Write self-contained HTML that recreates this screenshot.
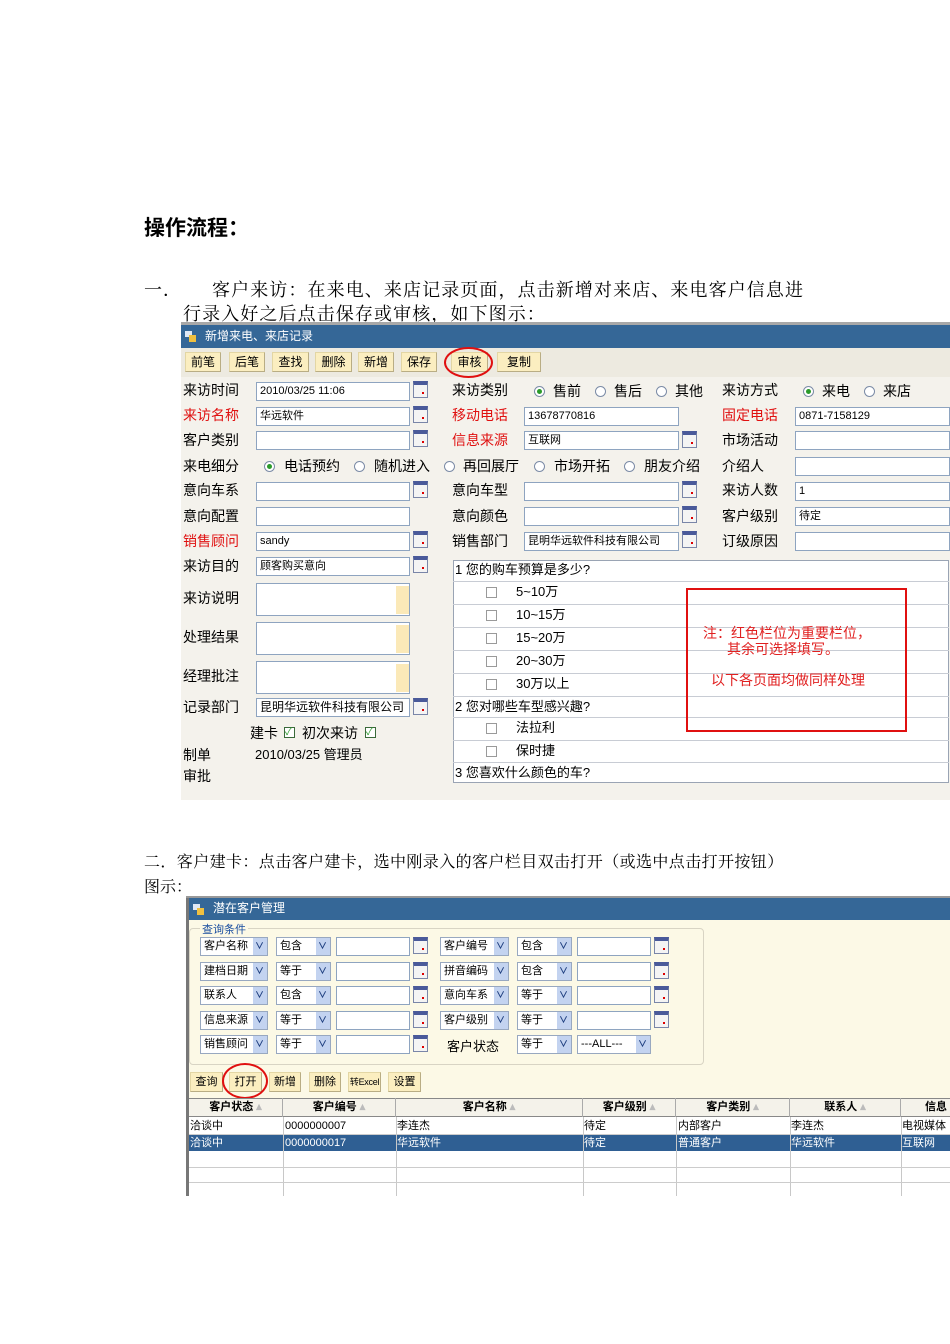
<!DOCTYPE html>
<html><head><meta charset="utf-8"><style>
*{margin:0;padding:0;box-sizing:border-box}
body{width:950px;height:1344px;background:#fff;position:relative;overflow:hidden;font-family:"Liberation Sans","Noto Sans CJK SC",sans-serif;color:#000}
.a{position:absolute;white-space:nowrap}
.s{font-family:"Liberation Serif","Noto Serif CJK SC",serif}
.l{position:absolute;font-size:14px;line-height:16px;white-space:nowrap}
.r{color:#e01010}
.in{position:absolute;height:19px;background:#fff;border:1px solid #8ea4c0;font-size:11px;line-height:17px;padding-left:3px;white-space:nowrap;overflow:hidden}
.cal{position:absolute;width:15px;height:17px;border:1px solid #7a86a8;background:#f4f4f4;border-top:4px solid #4a5a9a}
.cal:after{content:"";position:absolute;right:3px;bottom:3px;width:2px;height:2px;background:#d00}
.btn{position:absolute;height:20px;background:#fbeec0;border:1px solid #e3d6a4;border-right-color:#b9ad84;border-bottom-color:#b9ad84;font-size:12px;line-height:18px;text-align:center;white-space:nowrap;overflow:hidden}
.rad{position:absolute;width:11px;height:11px;border:1px solid #7b8ba6;border-radius:50%;background:#fff}
.rad.on:after{content:"";position:absolute;left:2px;top:2px;width:5px;height:5px;border-radius:50%;background:#2a9a2a}
.chk{position:absolute;width:11px;height:11px;border:1px solid #9a9a9a;background:#fff}
.ta{position:absolute;width:154px;height:33px;background:#fff;border:1px solid #8ea4c0}
.ta:after{content:"";position:absolute;right:0;top:2px;width:13px;height:28px;background:#fbe9b8}
.qr{position:absolute;left:453px;width:496px;border-bottom:1px solid #c8ccd4;font-size:13px;line-height:20px}
.sel{position:absolute;height:19px;background:#fff;border:1px solid #98a8c0;font-size:11px;line-height:17px;padding-left:3px;white-space:nowrap}
.sel:after{content:"";position:absolute;right:0;top:0;width:14px;height:17px;background:#c3d3f0}
.sel b{position:absolute;right:3px;top:0;font-size:9px;color:#204080;z-index:1;font-weight:bold}
.th{position:absolute;top:1098px;height:19px;font-size:11px;font-weight:bold;line-height:19px;text-align:center;border-right:1px solid #aaa}
.td{position:absolute;font-size:11px;line-height:17px;height:17px}
</style></head><body>

<div class="a" style="left:144px;top:212px;font-size:21px;font-weight:bold;font-family:'Liberation Serif','Noto Sans CJK SC',sans-serif">操作流程：</div>
<div class="a s" style="left:144px;top:276px;font-size:18px;letter-spacing:1px">一．</div>
<div class="a s" style="left:212px;top:276px;font-size:18px;letter-spacing:1.1px">客户来访：在来电、来店记录页面，点击新增对来店、来电客户信息进</div>
<div class="a s" style="left:183px;top:300px;font-size:18px;letter-spacing:1.1px">行录入好之后点击保存或审核，如下图示：</div>

<div class="a" style="left:181px;top:322px;width:769px;height:478px;background:#f4f2ec"></div>
<div class="a" style="left:181px;top:322px;width:769px;height:3px;background:#a8a8a8"></div>
<div class="a" style="left:181px;top:325px;width:769px;height:23px;background:#356797;color:#fff;font-size:12px;line-height:22px;padding-left:24px">新增来电、来店记录</div>
<div class="a" style="left:185px;top:331px;width:7px;height:6px;background:#dfe8f5"></div>
<div class="a" style="left:189px;top:335px;width:7px;height:7px;background:#f0c040"></div>
<div class="a" style="left:181px;top:348px;width:769px;height:29px;background:#edeae0"></div>
<div class="btn" style="left:185px;top:352px;width:36px">前笔</div>
<div class="btn" style="left:229px;top:352px;width:36px">后笔</div>
<div class="btn" style="left:272px;top:352px;width:37px">查找</div>
<div class="btn" style="left:315px;top:352px;width:37px">删除</div>
<div class="btn" style="left:358px;top:352px;width:36px">新增</div>
<div class="btn" style="left:401px;top:352px;width:36px">保存</div>
<div class="btn" style="left:451px;top:352px;width:37px">审核</div>
<div class="btn" style="left:497px;top:352px;width:44px">复制</div>
<div class="a" style="left:444px;top:347px;width:49px;height:31px;border:2px solid #e01010;border-radius:50%"></div>

<div class="l" style="left:183px;top:382px">来访时间</div>
<div class="in" style="left:256px;top:382px;width:154px">2010/03/25 11:06</div><div class="cal" style="left:413px;top:381px"></div>
<div class="l" style="left:452px;top:382px">来访类别</div>
<div class="rad on" style="left:534px;top:386px"></div><div class="l" style="left:553px;top:383px">售前</div>
<div class="rad" style="left:595px;top:386px"></div><div class="l" style="left:614px;top:383px">售后</div>
<div class="rad" style="left:656px;top:386px"></div><div class="l" style="left:675px;top:383px">其他</div>
<div class="l" style="left:722px;top:382px">来访方式</div>
<div class="rad on" style="left:803px;top:386px"></div><div class="l" style="left:822px;top:383px">来电</div>
<div class="rad" style="left:864px;top:386px"></div><div class="l" style="left:883px;top:383px">来店</div>

<div class="l r" style="left:183px;top:407px">来访名称</div>
<div class="in" style="left:256px;top:407px;width:154px">华远软件</div><div class="cal" style="left:413px;top:406px"></div>
<div class="l r" style="left:452px;top:407px">移动电话</div>
<div class="in" style="left:524px;top:407px;width:155px">13678770816</div>
<div class="l r" style="left:722px;top:407px">固定电话</div>
<div class="in" style="left:795px;top:407px;width:155px">0871-7158129</div>

<div class="l" style="left:183px;top:432px">客户类别</div>
<div class="in" style="left:256px;top:431px;width:154px"></div><div class="cal" style="left:413px;top:430px"></div>
<div class="l r" style="left:452px;top:432px">信息来源</div>
<div class="in" style="left:524px;top:431px;width:155px">互联网</div><div class="cal" style="left:682px;top:431px"></div>
<div class="l" style="left:722px;top:432px">市场活动</div>
<div class="in" style="left:795px;top:431px;width:155px"></div>

<div class="l" style="left:183px;top:458px">来电细分</div>
<div class="rad on" style="left:264px;top:461px"></div><div class="l" style="left:284px;top:458px">电话预约</div>
<div class="rad" style="left:354px;top:461px"></div><div class="l" style="left:374px;top:458px">随机进入</div>
<div class="rad" style="left:444px;top:461px"></div><div class="l" style="left:463px;top:458px">再回展厅</div>
<div class="rad" style="left:534px;top:461px"></div><div class="l" style="left:554px;top:458px">市场开拓</div>
<div class="rad" style="left:624px;top:461px"></div><div class="l" style="left:644px;top:458px">朋友介绍</div>
<div class="l" style="left:722px;top:458px">介绍人</div>
<div class="in" style="left:795px;top:457px;width:155px"></div>

<div class="l" style="left:183px;top:482px">意向车系</div>
<div class="in" style="left:256px;top:482px;width:154px"></div><div class="cal" style="left:413px;top:481px"></div>
<div class="l" style="left:452px;top:482px">意向车型</div>
<div class="in" style="left:524px;top:482px;width:155px"></div><div class="cal" style="left:682px;top:481px"></div>
<div class="l" style="left:722px;top:482px">来访人数</div>
<div class="in" style="left:795px;top:482px;width:155px">1</div>

<div class="l" style="left:183px;top:508px">意向配置</div>
<div class="in" style="left:256px;top:507px;width:154px"></div>
<div class="l" style="left:452px;top:508px">意向颜色</div>
<div class="in" style="left:524px;top:507px;width:155px"></div><div class="cal" style="left:682px;top:506px"></div>
<div class="l" style="left:722px;top:508px">客户级别</div>
<div class="in" style="left:795px;top:507px;width:155px">待定</div>

<div class="l r" style="left:183px;top:533px">销售顾问</div>
<div class="in" style="left:256px;top:532px;width:154px">sandy</div><div class="cal" style="left:413px;top:531px"></div>
<div class="l" style="left:452px;top:533px">销售部门</div>
<div class="in" style="left:524px;top:532px;width:155px">昆明华远软件科技有限公司</div><div class="cal" style="left:682px;top:531px"></div>
<div class="l" style="left:722px;top:533px">订级原因</div>
<div class="in" style="left:795px;top:532px;width:155px"></div>

<div class="l" style="left:183px;top:558px">来访目的</div>
<div class="in" style="left:256px;top:557px;width:154px">顾客购买意向</div><div class="cal" style="left:413px;top:556px"></div>
<div class="l" style="left:183px;top:590px">来访说明</div><div class="ta" style="left:256px;top:583px"></div>
<div class="l" style="left:183px;top:629px">处理结果</div><div class="ta" style="left:256px;top:622px"></div>
<div class="l" style="left:183px;top:668px">经理批注</div><div class="ta" style="left:256px;top:661px"></div>
<div class="l" style="left:183px;top:699px">记录部门</div>
<div class="in" style="left:256px;top:698px;width:154px;font-size:12px">昆明华远软件科技有限公司</div><div class="cal" style="left:413px;top:698px"></div>
<div class="l" style="left:250px;top:725px">建卡</div><div class="chk" style="left:284px;top:727px;border-color:#3a6a3a;color:#2a9a2a;font-size:10px;line-height:9px">✓</div>
<div class="l" style="left:302px;top:725px">初次来访</div><div class="chk" style="left:365px;top:727px;border-color:#3a6a3a;color:#2a9a2a;font-size:10px;line-height:9px">✓</div>
<div class="l" style="left:183px;top:747px">制单</div>
<div class="l" style="left:255px;top:747px;font-size:13px">2010/03/25 管理员</div>
<div class="l" style="left:183px;top:768px">审批</div>

<div class="a" style="left:453px;top:560px;width:496px;height:223px;border:1px solid #9aa4b4;background:#fff"></div>
<div class="qr" style="top:560px;height:22px;padding-left:2px">1 您的购车预算是多少?</div>
<div class="qr" style="top:582px;height:23px;padding-left:63px">5~10万</div>
<div class="qr" style="top:605px;height:23px;padding-left:63px">10~15万</div>
<div class="qr" style="top:628px;height:23px;padding-left:63px">15~20万</div>
<div class="qr" style="top:651px;height:23px;padding-left:63px">20~30万</div>
<div class="qr" style="top:674px;height:23px;padding-left:63px">30万以上</div>
<div class="qr" style="top:697px;height:21px;padding-left:2px">2 您对哪些车型感兴趣?</div>
<div class="qr" style="top:718px;height:23px;padding-left:63px">法拉利</div>
<div class="qr" style="top:741px;height:22px;padding-left:63px">保时捷</div>
<div class="qr" style="top:763px;height:20px;padding-left:2px;border:none">3 您喜欢什么颜色的车?</div>
<div class="chk" style="left:486px;top:587px"></div>
<div class="chk" style="left:486px;top:610px"></div>
<div class="chk" style="left:486px;top:633px"></div>
<div class="chk" style="left:486px;top:656px"></div>
<div class="chk" style="left:486px;top:679px"></div>
<div class="chk" style="left:486px;top:723px"></div>
<div class="chk" style="left:486px;top:746px"></div>
<div class="a" style="left:686px;top:588px;width:221px;height:144px;border:2px solid #e01010"></div>
<div class="a" style="left:703px;top:625px;font-size:14px;color:#e02020;line-height:16px">注：红色栏位为重要栏位，</div>
<div class="a" style="left:727px;top:641px;font-size:14px;color:#e02020;line-height:16px">其余可选择填写。</div>
<div class="a" style="left:711px;top:672px;font-size:14px;color:#e02020;line-height:16px">以下各页面均做同样处理</div>

<div class="a s" style="left:144px;top:849px;font-size:16px;letter-spacing:0.4px">二．客户建卡：点击客户建卡，选中刚录入的客户栏目双击打开（或选中点击打开按钮）</div>
<div class="a s" style="left:144px;top:874px;font-size:16px">图示：</div>

<div class="a" style="left:186px;top:896px;width:764px;height:300px;background:#fcf9e6"></div>
<div class="a" style="left:186px;top:896px;width:3px;height:300px;background:#777"></div>
<div class="a" style="left:186px;top:896px;width:764px;height:2px;background:#999"></div>
<div class="a" style="left:189px;top:898px;width:761px;height:22px;background:#356797;color:#fff;font-size:12px;line-height:21px;padding-left:24px">潜在客户管理</div>
<div class="a" style="left:193px;top:904px;width:7px;height:6px;background:#dfe8f5"></div>
<div class="a" style="left:197px;top:908px;width:7px;height:7px;background:#f0c040"></div>
<div class="a" style="left:189px;top:928px;width:515px;height:137px;border:1px solid #d8d4c4;border-radius:4px"></div>
<div class="a" style="left:200px;top:921px;font-size:11px;color:#1a4ea0;background:#fcf9e6;padding:0 2px">查询条件</div>

<div class="sel" style="left:200px;top:937px;width:68px">客户名称<b>∨</b></div>
<div class="sel" style="left:276px;top:937px;width:55px">包含<b>∨</b></div>
<div class="in" style="left:336px;top:937px;width:74px"></div><div class="cal" style="left:413px;top:937px"></div>
<div class="sel" style="left:440px;top:937px;width:69px">客户编号<b>∨</b></div>
<div class="sel" style="left:517px;top:937px;width:55px">包含<b>∨</b></div>
<div class="in" style="left:577px;top:937px;width:74px"></div><div class="cal" style="left:654px;top:937px"></div>

<div class="sel" style="left:200px;top:962px;width:68px">建档日期<b>∨</b></div>
<div class="sel" style="left:276px;top:962px;width:55px">等于<b>∨</b></div>
<div class="in" style="left:336px;top:962px;width:74px"></div><div class="cal" style="left:413px;top:962px"></div>
<div class="sel" style="left:440px;top:962px;width:69px">拼音编码<b>∨</b></div>
<div class="sel" style="left:517px;top:962px;width:55px">包含<b>∨</b></div>
<div class="in" style="left:577px;top:962px;width:74px"></div><div class="cal" style="left:654px;top:962px"></div>

<div class="sel" style="left:200px;top:986px;width:68px">联系人<b>∨</b></div>
<div class="sel" style="left:276px;top:986px;width:55px">包含<b>∨</b></div>
<div class="in" style="left:336px;top:986px;width:74px"></div><div class="cal" style="left:413px;top:986px"></div>
<div class="sel" style="left:440px;top:986px;width:69px">意向车系<b>∨</b></div>
<div class="sel" style="left:517px;top:986px;width:55px">等于<b>∨</b></div>
<div class="in" style="left:577px;top:986px;width:74px"></div><div class="cal" style="left:654px;top:986px"></div>

<div class="sel" style="left:200px;top:1011px;width:68px">信息来源<b>∨</b></div>
<div class="sel" style="left:276px;top:1011px;width:55px">等于<b>∨</b></div>
<div class="in" style="left:336px;top:1011px;width:74px"></div><div class="cal" style="left:413px;top:1011px"></div>
<div class="sel" style="left:440px;top:1011px;width:69px">客户级别<b>∨</b></div>
<div class="sel" style="left:517px;top:1011px;width:55px">等于<b>∨</b></div>
<div class="in" style="left:577px;top:1011px;width:74px"></div><div class="cal" style="left:654px;top:1011px"></div>

<div class="sel" style="left:200px;top:1035px;width:68px">销售顾问<b>∨</b></div>
<div class="sel" style="left:276px;top:1035px;width:55px">等于<b>∨</b></div>
<div class="in" style="left:336px;top:1035px;width:74px"></div><div class="cal" style="left:413px;top:1035px"></div>
<div class="a" style="left:447px;top:1036px;font-size:13px">客户状态</div>
<div class="sel" style="left:517px;top:1035px;width:55px">等于<b>∨</b></div>
<div class="sel" style="left:577px;top:1035px;width:74px">---ALL---<b>∨</b></div>

<div class="btn" style="left:190px;top:1072px;width:33px;font-size:11px">查询</div>
<div class="btn" style="left:229px;top:1072px;width:33px;font-size:11px">打开</div>
<div class="btn" style="left:269px;top:1072px;width:32px;font-size:11px">新增</div>
<div class="btn" style="left:309px;top:1072px;width:32px;font-size:11px">删除</div>
<div class="btn" style="left:348px;top:1072px;width:33px;font-size:9px;letter-spacing:-0.3px;padding:0">转Excel</div>
<div class="btn" style="left:388px;top:1072px;width:33px;font-size:11px">设置</div>
<div class="a" style="left:222px;top:1063px;width:46px;height:36px;border:2px solid #e01010;border-radius:50%"></div>

<div class="a" style="left:189px;top:1098px;width:761px;height:98px;background:#fff"></div>
<div class="a" style="left:189px;top:1098px;width:761px;height:19px;background:#f4f2ea;border-top:1px solid #888;border-bottom:1px solid #888"></div>
<div class="th" style="left:189px;width:94px">客户状态 <span style="color:#bbb">▴</span></div>
<div class="th" style="left:283px;width:113px">客户编号 <span style="color:#bbb">▴</span></div>
<div class="th" style="left:396px;width:187px">客户名称 <span style="color:#bbb">▴</span></div>
<div class="th" style="left:583px;width:93px">客户级别 <span style="color:#bbb">▴</span></div>
<div class="th" style="left:676px;width:114px">客户类别 <span style="color:#bbb">▴</span></div>
<div class="th" style="left:790px;width:111px">联系人 <span style="color:#bbb">▴</span></div>
<div class="th" style="left:901px;width:60px;text-align:left;padding-left:24px">信息</div>
<div class="a" style="left:189px;top:1134px;width:761px;height:17px;background:#2f5f93"></div>
<div class="a" style="left:283px;top:1117px;width:1px;height:79px;background:#c8c8c8"></div>
<div class="a" style="left:396px;top:1117px;width:1px;height:79px;background:#c8c8c8"></div>
<div class="a" style="left:583px;top:1117px;width:1px;height:79px;background:#c8c8c8"></div>
<div class="a" style="left:676px;top:1117px;width:1px;height:79px;background:#c8c8c8"></div>
<div class="a" style="left:790px;top:1117px;width:1px;height:79px;background:#c8c8c8"></div>
<div class="a" style="left:901px;top:1117px;width:1px;height:79px;background:#c8c8c8"></div>
<div class="a" style="left:189px;top:1134px;width:761px;height:1px;background:#ccc"></div>
<div class="a" style="left:189px;top:1167px;width:761px;height:1px;background:#ccc"></div>
<div class="a" style="left:189px;top:1182px;width:761px;height:1px;background:#ccc"></div>
<div class="td" style="left:190px;top:1118px">洽谈中</div><div class="td" style="left:285px;top:1118px">0000000007</div><div class="td" style="left:397px;top:1118px">李连杰</div><div class="td" style="left:584px;top:1118px">待定</div><div class="td" style="left:678px;top:1118px">内部客户</div><div class="td" style="left:791px;top:1118px">李连杰</div><div class="td" style="left:902px;top:1118px">电视媒体</div>
<div class="td" style="left:190px;top:1135px;color:#fff">洽谈中</div><div class="td" style="left:285px;top:1135px;color:#fff">0000000017</div><div class="td" style="left:397px;top:1135px;color:#fff">华远软件</div><div class="td" style="left:584px;top:1135px;color:#fff">待定</div><div class="td" style="left:678px;top:1135px;color:#fff">普通客户</div><div class="td" style="left:791px;top:1135px;color:#fff">华远软件</div><div class="td" style="left:902px;top:1135px;color:#fff">互联网</div>
</body></html>
